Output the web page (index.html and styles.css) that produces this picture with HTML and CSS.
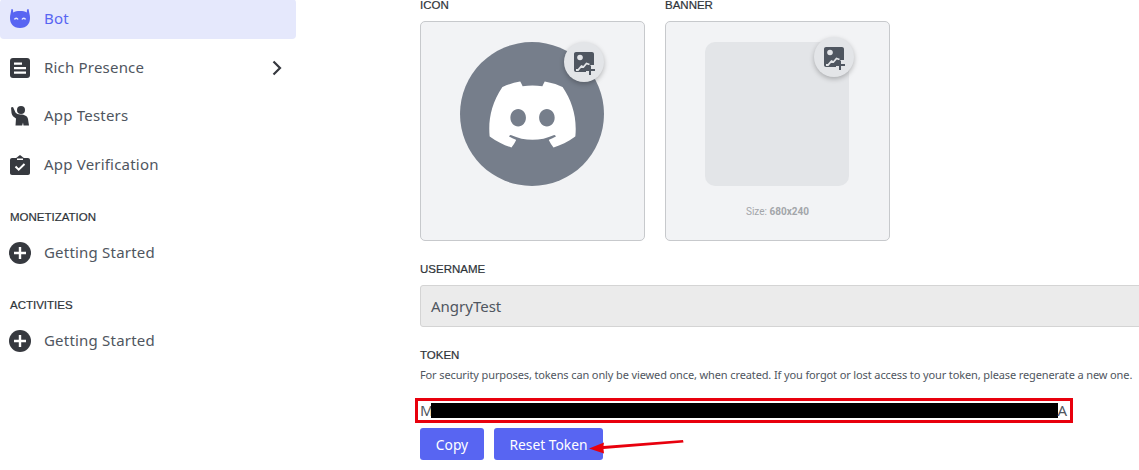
FILE: index.html
```html
<!DOCTYPE html>
<html lang="en">
<head>
    <meta charset="UTF-8">
    <title>Bot</title>
    <link rel="stylesheet" href="styles.css">
</head>
<body>

<div class="page">
    <nav class="sidebar">
        <a class="nav-item active">
            <svg class="nav-icon" viewBox="0 0 20 20"><path fill="#5865f2" d="M1.500 0 3 .5 3.200 3.400C5 2.500 7.300 2 10 2s5 .5 6.800 1.400L17 .5 18.500 0 19.500 5c.3 1 .5 2.400.5 4 0 5.500-3 10-10 10S0 14.500 0 9c0-1.600.2-3 .5-4Z"/><path fill="none" stroke="#e5e8fc" stroke-width="1.500" d="M4.500 10.500c.6-1.600 2.800-1.600 3.400 0M12.100 10.500c.6-1.600 2.800-1.600 3.400 0"/></svg>
            <span>Bot</span>
        </a>
        <a class="nav-item">
            <svg class="nav-icon" viewBox="0 0 20 20"><rect width="20" height="20" rx="3" fill="#36393f"/><path fill="#fff" d="M4 4.500h8v2.200H4zM4 9h12v2.200H4zM4 13.500h12v2.200H4z"/></svg>
            <span>Rich Presence</span>
            <svg class="chevron" viewBox="0 0 10 16"><path fill="none" stroke="#36393f" stroke-width="2.200" d="M1.500 1.500 8 8l-6.500 6.500"/></svg>
        </a>
        <a class="nav-item">
            <svg class="nav-icon" viewBox="0 0 20 20"><circle cx="11" cy="4" r="4" fill="#36393f"/><path fill="#36393f" d="M1 1.500 3 1l2.500 5.500c1 1 2.500 2 5 2 4 0 7 1.500 7.500 4.500l1 6.500h-5.500l-.5-3-.8 3H5.500l.5-7C3.500 11 2 9.500 1.500 7Z"/></svg>
            <span>App Testers</span>
        </a>
        <a class="nav-item">
            <svg class="nav-icon" viewBox="0 0 20 20"><path fill="#36393f" d="M2 3h16c1.100 0 2 .9 2 2v13c0 1.100-.9 2-2 2H2c-1.100 0-2-.9-2-2V5c0-1.100.9-2 2-2Z"/><path fill="#36393f" d="M5.500 3.500 10 0l4.500 3.500Z"/><path fill="#fff" d="M7 3.500h6V5H7z"/><path fill="none" stroke="#fff" stroke-width="2" d="m5.500 11.500 3.200 3.200 5.800-5.700"/></svg>
            <span>App Verification</span>
        </a>

        <h4 class="nav-heading">MONETIZATION</h4>
        <a class="nav-item">
            <svg class="nav-icon plus" viewBox="0 0 22 22"><circle cx="11" cy="11" r="11" fill="#36393f"/><path fill="#fff" d="M9.800 5h2.400v4.800H17v2.400h-4.800V17H9.800v-4.800H5V9.800h4.800z"/></svg>
            <span>Getting Started</span>
        </a>

        <h4 class="nav-heading second">ACTIVITIES</h4>
        <a class="nav-item">
            <svg class="nav-icon plus" viewBox="0 0 22 22"><circle cx="11" cy="11" r="11" fill="#36393f"/><path fill="#fff" d="M9.800 5h2.400v4.800H17v2.400h-4.800V17H9.800v-4.800H5V9.800h4.800z"/></svg>
            <span>Getting Started</span>
        </a>
    </nav>

    <main class="content">
        <div class="uploads">
            <div class="upload">
                <label class="field-label">ICON</label>
                <div class="upload-card">
                    <div class="avatar">
                        <svg class="clyde" viewBox="0 2.700 24 18.600"><path fill="#fff" d="M20.317 4.3698a19.7913 19.7913 0 00-4.8851-1.5152.0741.0741 0 00-.0785.0371c-.211.3753-.4447.8648-.6083 1.2495-1.8447-.2762-3.68-.2762-5.4868 0-.1636-.3933-.4058-.8742-.6177-1.2495a.077.077 0 00-.0785-.037 19.7363 19.7363 0 00-4.8852 1.515.0699.0699 0 00-.0321.0277C.5334 9.0458-.319 13.5799.0992 18.0578a.0824.0824 0 00.0312.0561c2.0528 1.5076 4.0413 2.4228 5.9929 3.0294a.0777.0777 0 00.0842-.0276c.4616-.6304.8731-1.2952 1.226-1.9942a.076.076 0 00-.0416-.1057c-.6528-.2476-1.2743-.5495-1.8722-.8923a.077.077 0 01-.0076-.1277c.1258-.0943.2517-.1923.3718-.2914a.0743.0743 0 01.0776-.0105c3.9278 1.7933 8.18 1.7933 12.0614 0a.0739.0739 0 01.0785.0095c.1202.099.246.1981.3728.2924a.077.077 0 01-.0066.1276 12.2986 12.2986 0 01-1.873.8914.0766.0766 0 00-.0407.1067c.3604.698.7719 1.3628 1.225 1.9932a.076.076 0 00.0842.0286c1.961-.6067 3.9495-1.5219 6.0023-3.0294a.077.077 0 00.0313-.0552c.5004-5.177-.8382-9.6739-3.5485-13.6604a.061.061 0 00-.0312-.0286zM8.02 15.3312c-1.1825 0-2.1569-1.0857-2.1569-2.419 0-1.3332.9555-2.4189 2.157-2.4189 1.2108 0 2.1757 1.0952 2.1568 2.419 0 1.3332-.9555 2.4189-2.1569 2.4189zm7.9748 0c-1.1825 0-2.1569-1.0857-2.1569-2.419 0-1.3332.9554-2.4189 2.1569-2.4189 1.2108 0 2.1757 1.0952 2.1568 2.419 0 1.3332-.946 2.4189-2.1568 2.4189Z"/></svg>
                    </div>
                    <button class="add-image">
                        <svg viewBox="0 0 24 24"><path fill="#4f5660" d="M2 0h16c1.100 0 2 .9 2 2v11h-4v4h-4v3H2c-1.100 0-2-.9-2-2V2C0 .9.9 0 2 0Z"/><circle cx="6" cy="5.500" r="2.800" fill="#e3e5e8"/><path fill="none" stroke="#e3e5e8" stroke-width="1.800" d="M2 18h2l3.500-4 2 1 3-3.500 3 1"/><path fill="#4f5660" d="M15 13.500h2V17h4v2h-4v4h-2v-4h-3.500v-2H15z"/></svg>
                    </button>
                </div>
            </div>
            <div class="upload">
                <label class="field-label">BANNER</label>
                <div class="upload-card">
                    <div class="banner"></div>
                    <button class="add-image banner-btn">
                        <svg viewBox="0 0 24 24"><path fill="#4f5660" d="M2 0h16c1.100 0 2 .9 2 2v11h-4v4h-4v3H2c-1.100 0-2-.9-2-2V2C0 .9.9 0 2 0Z"/><circle cx="6" cy="5.500" r="2.800" fill="#e3e5e8"/><path fill="none" stroke="#e3e5e8" stroke-width="1.800" d="M2 18h2l3.500-4 2 1 3-3.500 3 1"/><path fill="#4f5660" d="M15 13.500h2V17h4v2h-4v4h-2v-4h-3.500v-2H15z"/></svg>
                    </button>
                    <p class="size-hint">Size: <b>680x240</b></p>
                </div>
            </div>
        </div>

        <label class="field-label username-label">USERNAME</label>
        <div class="username">AngryTest</div>

        <label class="field-label token-label">TOKEN</label>
        <p class="token-help">For security purposes, tokens can only be viewed once, when created. If you forgot or lost access to your token, please regenerate a new one.</p>

        <div class="token">
            <span>M</span><span class="redacted"></span><span>A</span>
            <div class="red-box"></div>
        </div>

        <div class="actions">
            <button class="btn copy-btn">Copy</button>
            <button class="btn reset-btn">Reset Token</button>
            <svg class="arrow" viewBox="0 0 95 14"><path fill="#e8000d" d="M0 8.500 15 2.500l-.5 3.500L94 0l.5 2.500-80 6.500.5 4.500Z"/></svg>
        </div>
    </main>
</div>

</body>
</html>
```

FILE: styles.css
```css
html, body {
    margin: 0;
    height: 470px;
    overflow: hidden;
    background: #fff;
}
body {
    font-family: "Noto Sans", Arial, sans-serif;
    color: #4f5660;
}
.page {
    display: flex;
}

/* sidebar */
.sidebar {
    width: 296px;
    flex-shrink: 0;
    margin-top: -1px;
}
.nav-item {
    display: flex;
    align-items: center;
    gap: 14px;
    height: 40px;
    margin-bottom: 8.6px;
    padding-left: 10px;
    border-radius: 4px;
    font-size: 15px;
    letter-spacing: 0.2px;
}
.nav-item span {
    margin-top: -2px;
}
.nav-item.active {
    background-color: #e5e8fc;
    color: #5865f2;
}
.nav-icon {
    width: 20px;
    height: 20px;
    flex-shrink: 0;
}
.nav-icon.plus {
    width: 22px;
    height: 22px;
    margin-left: -1px;
    margin-right: -1px;
}
.chevron {
    width: 10px;
    height: 16px;
    margin-left: auto;
    margin-right: 14px;
}
.nav-heading {
    margin: 21px 0 8px 10px;
    padding-top: 3px;
    font-family: "Liberation Sans", Arial, sans-serif;
    font-size: 11.5px;
    line-height: 16px;
    font-weight: normal;
    -webkit-text-stroke: 0.2px #2e3338;
    color: #2e3338;
}

/* main column */
.content {
    margin-left: 124px;
    margin-top: -3px;
    width: 730px;
    flex-shrink: 0;
}
.uploads {
    display: flex;
    gap: 20px;
}
.field-label {
    display: block;
    margin-bottom: 8px;
    font-family: "Liberation Sans", Arial, sans-serif;
    font-size: 11.5px;
    line-height: 16px;
    -webkit-text-stroke: 0.2px #2e3338;
    color: #2e3338;
}
.upload-card {
    position: relative;
    box-sizing: border-box;
    width: 225px;
    height: 220px;
    padding-top: 20px;
    background-color: #f2f3f5;
    border: 1px solid #c7c9cc;
    border-radius: 5px;
}
.avatar {
    display: flex;
    align-items: center;
    justify-content: center;
    width: 144px;
    height: 144px;
    margin-left: 39px;
    border-radius: 50%;
    background-color: #767e8b;
}
.clyde {
    width: 87px;
    height: 67px;
}
.banner {
    width: 144px;
    height: 144px;
    margin-left: 39px;
    border-radius: 10px;
    background-color: #e3e5e8;
}
.add-image {
    position: absolute;
    top: 20px;
    left: 143px;
    display: flex;
    align-items: center;
    justify-content: center;
    width: 40px;
    height: 40px;
    padding: 0;
    border: none;
    border-radius: 50%;
    background-color: #e3e5e8;
    box-shadow: 0 2px 5px rgba(0, 0, 0, 0.25);
}
.add-image svg {
    width: 24px;
    height: 24px;
    margin-left: 4px;
    margin-top: 4px;
}
.banner-btn {
    top: 15px;
    left: 148px;
}
.size-hint {
    margin: 19px 0 0;
    text-align: center;
    font-family: Roboto, Arial, sans-serif;
    font-size: 10px;
    line-height: 14px;
    color: #a3a6aa;
}
.username-label {
    margin-top: 20px;
}
.username {
    box-sizing: border-box;
    height: 42px;
    padding: 0 10px;
    background-color: #ebebeb;
    border: 1px solid #d4d4d4;
    border-radius: 3px;
    font-size: 15px;
    line-height: 40px;
    color: #4f5660;
}
.token-label {
    margin-top: 20px;
    margin-bottom: 4px;
}
.token-help {
    margin: 0;
    font-size: 11px;
    line-height: 16px;
    letter-spacing: -0.12px;
    color: #4f5660;
    white-space: nowrap;
}
.token {
    position: relative;
    display: flex;
    align-items: center;
    height: 20px;
    margin-top: 17px;
    font-size: 15px;
    color: #4f5660;
}
.redacted {
    width: 627px;
    height: 15px;
    margin-left: -3px;
    background: #000;
}
.red-box {
    position: absolute;
    top: -2px;
    left: -5px;
    box-sizing: border-box;
    width: 658px;
    height: 25px;
    border: 3px solid #e8000d;
}
.actions {
    position: relative;
    display: flex;
    gap: 10px;
    margin-top: 8px;
}
.btn {
    height: 32px;
    padding: 0;
    border: none;
    border-radius: 3px;
    background-color: #5865f2;
    color: #fff;
    font-family: "Noto Sans", Arial, sans-serif;
    font-size: 13.8px;
}
.copy-btn {
    width: 64px;
}
.reset-btn {
    width: 109px;
}
.arrow {
    position: absolute;
    left: 169px;
    top: 12px;
    width: 95px;
    height: 14px;
}
```
